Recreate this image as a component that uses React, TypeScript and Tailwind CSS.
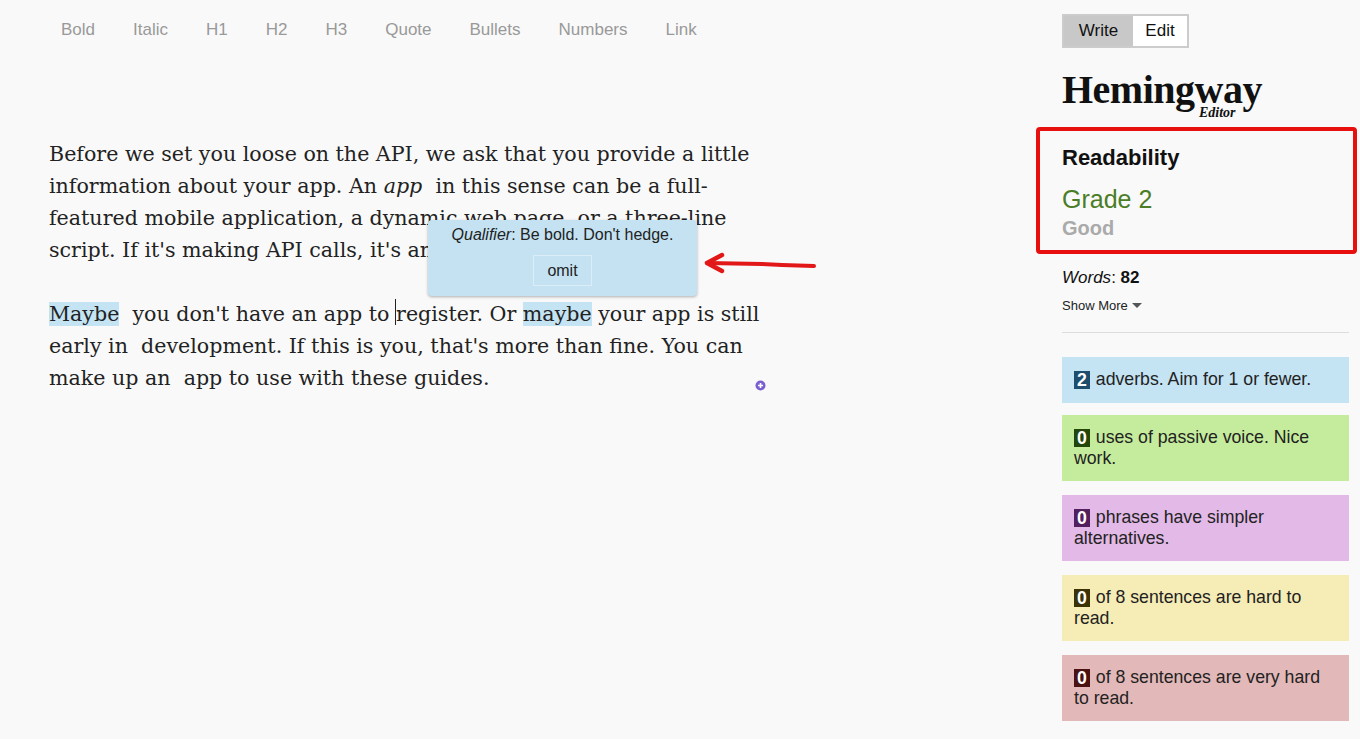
import React from "react";

const tools = ["Bold", "Italic", "H1", "H2", "H3", "Quote", "Bullets", "Numbers", "Link"];

const cards = [
  { n: "2", text: "adverbs. Aim for 1 or fewer.", bg: "bg-[#c4e3f3]", badge: "bg-[#1e4d6e]" },
  { n: "0", text: "uses of passive voice. Nice work.", bg: "bg-[#c5ec9c]", badge: "bg-[#23460b]" },
  { n: "0", text: "phrases have simpler alternatives.", bg: "bg-[#e2b9e7]", badge: "bg-[#541f5e]" },
  { n: "0", text: "of 8 sentences are hard to read.", bg: "bg-[#f6ecb6]", badge: "bg-[#3b3208]" },
  { n: "0", text: "of 8 sentences are very hard to read.", bg: "bg-[#e3b8b8]", badge: "bg-[#4b1212]" },
];

function Hl({ children }: { children: React.ReactNode }) {
  return <span className="bg-[#c4e3f3]">{children}</span>;
}

export default function App() {
  return (
    <div className="flex h-[739px] w-[1360px] overflow-hidden bg-[#f9f9f9] font-['Liberation_Sans',Arial,sans-serif]">
      {/* editor column */}
      <div className="relative flex-1">
        <div className="flex gap-[38px] pl-[61px] pt-[19px] text-[17px] leading-[22px] text-[#999]">
          {tools.map((t) => (
            <span key={t}>{t}</span>
          ))}
        </div>

        <div className="mt-[97px] pl-[49px] font-['DejaVu_Serif',serif] text-[20.6px] leading-[32px] text-[#222] whitespace-nowrap">
          <p>Before we set you loose on the API, we ask that you provide a little</p>
          <p>
            information about your app. An <i>app</i>&nbsp; in this sense can be a full-
          </p>
          <p>featured mobile application, a dynamic web page, or a three-line</p>
          <p>script. If it's making API calls, it's an app.</p>
          <p className="mt-[32px]">
            <Hl>Maybe</Hl>&nbsp; you don't have an app to{" "}
            <span className="relative">
              <span className="absolute left-[-1px] top-[-3px] h-[26px] w-px bg-[#222]" />
            </span>
            register. Or <Hl>maybe</Hl> your app is still
          </p>
          <p>early in&nbsp; development. If this is you, that's more than fine. You can</p>
          <p>make up an&nbsp; app to use with these guides.</p>
        </div>

        {/* tooltip */}
        <div className="absolute left-[428px] top-[220px] flex h-[76px] w-[269px] flex-col items-center rounded-[4px] bg-[#c4e2f2] pt-[3px] text-[16px] text-[#222] shadow-[0_1px_3px_rgba(0,0,0,0.3)]">
          <div>
            <i>Qualifier</i>: Be bold. Don't hedge.
          </div>
          <div className="mt-[8px] flex h-[31px] w-[59px] items-center justify-center border border-[#dbeef8] text-[16px]">
            omit
          </div>
        </div>

        {/* red arrow annotation */}
        <svg className="absolute left-[702px] top-[252px]" width="116" height="24" viewBox="0 0 116 24">
          <path d="M5 11 L60 12 L80 13 L112 14" stroke="#e21818" strokeWidth="4" fill="none" strokeLinecap="round" />
          <path d="M20 3 L5 11 L20 19" stroke="#e21818" strokeWidth="4.5" fill="none" strokeLinecap="round" strokeLinejoin="round" />
        </svg>

        {/* small plus dot */}
        <svg className="absolute left-[755px] top-[380px]" width="11" height="11" viewBox="0 0 11 11">
          <circle cx="5.5" cy="5.5" r="5" fill="#7a5fd0" />
          <path d="M5.5 3 V8 M3 5.5 H8" stroke="#fff" strokeWidth="1.6" />
        </svg>
      </div>

      {/* sidebar */}
      <div className="w-[298px] shrink-0 pr-[11px] pt-[14px]">
        <div className="flex h-[34px] w-[127px] border-2 border-[#ccc] text-[17px] text-[#111]">
          <div className="flex w-[69px] items-center justify-center bg-[#c8c8c8]">Write</div>
          <div className="flex flex-1 items-center justify-center bg-white">Edit</div>
        </div>

        <div className="relative mt-[20px] h-[58px] font-['Liberation_Serif',serif]">
          <div className="text-[40px] font-bold leading-[44px] tracking-[-0.5px] text-[#111]">Hemingway</div>
          <div className="absolute left-[137px] top-[34px] text-[14px] font-bold italic text-[#111]">Editor</div>
        </div>

        <div className="-ml-[26px] -mr-[8px] mt-[1px] h-[127px] rounded-[4px] border-4 border-[#e80f0f] pl-[22px] pt-[14px]">
          <div className="text-[22px] font-bold leading-[26px] text-[#111]">Readability</div>
          <div className="mt-[14px] text-[25px] leading-[28px] text-[#4b7d27]">Grade 2</div>
          <div className="mt-[3px] text-[20px] font-bold leading-[24px] text-[#aaa]">Good</div>
        </div>

        <div className="mt-[13px] text-[17px] leading-[22px] text-[#111]">
          <i>Words</i>: <b>82</b>
        </div>
        <div className="mt-[7px] flex items-center gap-[4px] text-[13px] text-[#222]">
          Show More
          <svg width="10" height="6" viewBox="0 0 10 6">
            <path d="M0 0 H10 L5 5 Z" fill="#555" />
          </svg>
        </div>
        <div className="mt-[16px] h-px bg-[#ddd]" />

        <div className="mt-[24px] flex flex-col gap-[14px]">
          {cards.map((c, i) => (
            <div
              key={i}
              className={`${c.bg} pl-[12px] pr-[22px] text-[17.7px] leading-[21px] text-[#222] ${i === 0 ? "-mb-[2px] h-[46px] pt-[12px]" : "h-[66px] pt-[12px]"}`}
            >
              <span className={`${c.badge} mr-[6px] inline-block px-[3px] align-[-1px] font-bold leading-[18px] text-white`}>{c.n}</span>
              {c.text}
            </div>
          ))}
        </div>
      </div>
    </div>
  );
}
